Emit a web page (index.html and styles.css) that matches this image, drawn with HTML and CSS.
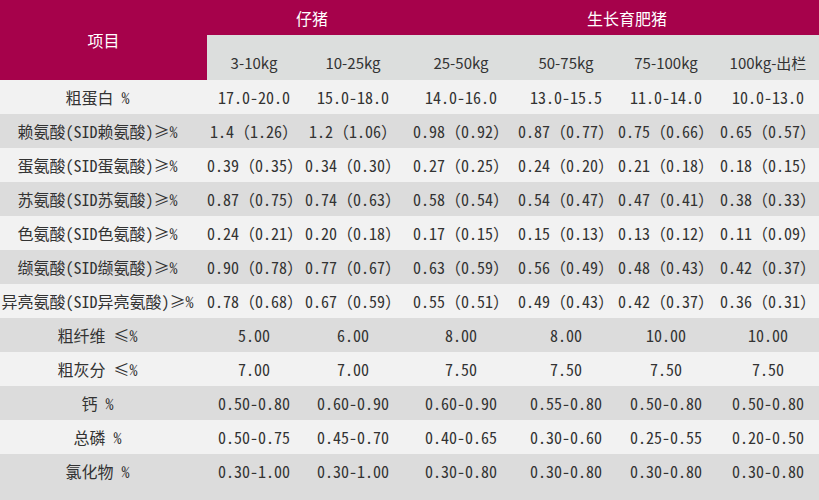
FILE: index.html
```html
<!DOCTYPE html>
<html lang="zh-CN">
<head>
<meta charset="utf-8">
<title>猪饲料营养标准</title>
<link rel="stylesheet" href="styles.css">
</head>
<body>
<div class="table">
  <div class="head">
    <div class="h-item">项目</div>
    <div class="h-group piglet">仔猪</div>
    <div class="h-group grower">生长育肥猪</div>
    <div class="h-sub">3-10kg</div>
    <div class="h-sub">10-25kg</div>
    <div class="h-sub">25-50kg</div>
    <div class="h-sub">50-75kg</div>
    <div class="h-sub">75-100kg</div>
    <div class="h-sub">100kg-出栏</div>
  </div>
  <div class="row light">
    <div class="label">粗蛋白 %</div>
    <div class="cell">17.0-20.0</div><div class="cell">15.0-18.0</div><div class="cell">14.0-16.0</div><div class="cell">13.0-15.5</div><div class="cell">11.0-14.0</div><div class="cell">10.0-13.0</div>
  </div>
  <div class="row dark">
    <div class="label">赖氨酸(SID赖氨酸)≥%</div>
    <div class="cell">1.4（1.26）</div><div class="cell">1.2（1.06）</div><div class="cell">0.98（0.92）</div><div class="cell">0.87（0.77）</div><div class="cell">0.75（0.66）</div><div class="cell">0.65（0.57）</div>
  </div>
  <div class="row light">
    <div class="label">蛋氨酸(SID蛋氨酸)≥%</div>
    <div class="cell">0.39（0.35）</div><div class="cell">0.34（0.30）</div><div class="cell">0.27（0.25）</div><div class="cell">0.24（0.20）</div><div class="cell">0.21（0.18）</div><div class="cell">0.18（0.15）</div>
  </div>
  <div class="row dark">
    <div class="label">苏氨酸(SID苏氨酸)≥%</div>
    <div class="cell">0.87（0.75）</div><div class="cell">0.74（0.63）</div><div class="cell">0.58（0.54）</div><div class="cell">0.54（0.47）</div><div class="cell">0.47（0.41）</div><div class="cell">0.38（0.33）</div>
  </div>
  <div class="row light">
    <div class="label">色氨酸(SID色氨酸)≥%</div>
    <div class="cell">0.24（0.21）</div><div class="cell">0.20（0.18）</div><div class="cell">0.17（0.15）</div><div class="cell">0.15（0.13）</div><div class="cell">0.13（0.12）</div><div class="cell">0.11（0.09）</div>
  </div>
  <div class="row dark">
    <div class="label">缬氨酸(SID缬氨酸)≥%</div>
    <div class="cell">0.90（0.78）</div><div class="cell">0.77（0.67）</div><div class="cell">0.63（0.59）</div><div class="cell">0.56（0.49）</div><div class="cell">0.48（0.43）</div><div class="cell">0.42（0.37）</div>
  </div>
  <div class="row light">
    <div class="label">异亮氨酸(SID异亮氨酸)≥%</div>
    <div class="cell">0.78（0.68）</div><div class="cell">0.67（0.59）</div><div class="cell">0.55（0.51）</div><div class="cell">0.49（0.43）</div><div class="cell">0.42（0.37）</div><div class="cell">0.36（0.31）</div>
  </div>
  <div class="row dark">
    <div class="label">粗纤维 ≤%</div>
    <div class="cell">5.00</div><div class="cell">6.00</div><div class="cell">8.00</div><div class="cell">8.00</div><div class="cell">10.00</div><div class="cell">10.00</div>
  </div>
  <div class="row light">
    <div class="label">粗灰分 ≤%</div>
    <div class="cell">7.00</div><div class="cell">7.00</div><div class="cell">7.50</div><div class="cell">7.50</div><div class="cell">7.50</div><div class="cell">7.50</div>
  </div>
  <div class="row dark">
    <div class="label">钙 %</div>
    <div class="cell">0.50-0.80</div><div class="cell">0.60-0.90</div><div class="cell">0.60-0.90</div><div class="cell">0.55-0.80</div><div class="cell">0.50-0.80</div><div class="cell">0.50-0.80</div>
  </div>
  <div class="row light">
    <div class="label">总磷 %</div>
    <div class="cell">0.50-0.75</div><div class="cell">0.45-0.70</div><div class="cell">0.40-0.65</div><div class="cell">0.30-0.60</div><div class="cell">0.25-0.55</div><div class="cell">0.20-0.50</div>
  </div>
  <div class="row dark last">
    <div class="label">氯化物 %</div>
    <div class="cell">0.30-1.00</div><div class="cell">0.30-1.00</div><div class="cell">0.30-0.80</div><div class="cell">0.30-0.80</div><div class="cell">0.30-0.80</div><div class="cell">0.30-0.80</div>
  </div>
</div>
</body>
</html>
```

FILE: styles.css
```css
html, body {
  margin: 0;
  padding: 0;
  background: #dcdcdc;
}

.table {
  width: 819px;
  height: 500px;
  background: #dcdcdc;
  color: #333;
  font-family: "Noto Sans Mono CJK SC", "Noto Sans CJK SC", "Liberation Mono", monospace;
  font-size: 16px;
  overflow: hidden;
}

.head {
  display: grid;
  grid-template-columns: 207px 94px 104px 112px 98px 102px 102px;
  grid-template-rows: 35px 45px;
  font-family: "Noto Sans CJK SC", "Noto Sans", sans-serif;
}

.h-item {
  grid-row: 1 / 3;
  grid-column: 1;
  background: #a6024b;
  color: #fff;
  display: flex;
  align-items: center;
  justify-content: center;
  font-size: 16px;
}

.h-group {
  grid-row: 1;
  background: #a6024b;
  color: #fff;
  display: flex;
  align-items: center;
  justify-content: center;
  font-size: 16px;
}

.piglet {
  grid-column: 2 / 4;
  padding-left: 12px;
}

.grower {
  grid-column: 4 / 8;
  padding-left: 30px;
}

.h-sub {
  grid-row: 2;
  background: #dcdedd;
  display: flex;
  align-items: center;
  justify-content: center;
  padding-top: 10px;
  font-size: 15px;
  color: #333;
}

.row {
  display: grid;
  grid-template-columns: 207px 94px 104px 112px 98px 102px 102px;
  height: 34px;
  align-items: center;
}

.row.light {
  background: #f2f2f2;
}

.row.dark {
  background: #dcdcdc;
}

.label {
  text-align: center;
  padding-right: 12px;
  white-space: nowrap;
}

.cell {
  text-align: center;
  white-space: nowrap;
}
```
